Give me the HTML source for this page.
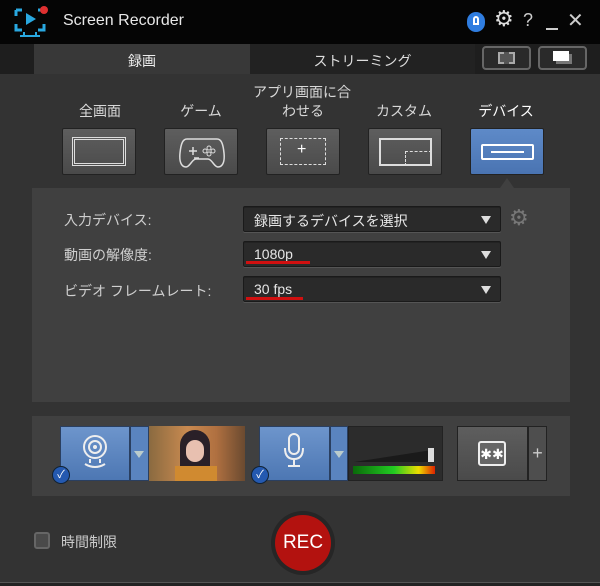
<!DOCTYPE html>
<html><head><meta charset="utf-8"><style>
*{margin:0;padding:0;box-sizing:border-box}
body{width:600px;height:586px;background:#333;position:relative;overflow:hidden;font-family:"Liberation Sans","Noto Sans CJK JP",sans-serif;color:#ddd}
.a{position:absolute}
.lbl{font-size:14px;color:#d8d8d8;text-align:center;width:100px}
.btn{position:absolute;top:128px;width:74px;height:47px;background:linear-gradient(#5e5e5e,#4a4a4a);border:1px solid #222;border-radius:2px}
.dd{position:absolute;left:243px;width:258px;height:26px;background:#2a2a2a;border:1px solid #1a1a1a;border-radius:2px;box-shadow:inset 0 1px 0 #222, 0 1px 0 #555;font-size:14px;color:#e6e6e6;padding:4px 10px}
.dd:after{content:"";position:absolute;right:9px;top:9px;border-left:5px solid transparent;border-right:5px solid transparent;border-top:8px solid #ddd}
.fl{position:absolute;left:64px;font-size:14px;color:#cfcfcf}
</style></head><body>
<div class="a" style="left:0;top:0;width:600px;height:44px;background:#050505"></div>
<svg class="a" style="left:14px;top:6px" width="34" height="32" viewBox="0 0 34 32"><path d="M2 4h6M2 4v6M2 18v6h6M30 18v6h-6M24 4h3" stroke="#29a8e0" stroke-width="3" fill="none"/><path d="M12 7l10 6-10 6z" fill="#29a8e0"/><path d="M10 26v4M22 26v4M6 30h20" stroke="#29a8e0" stroke-width="2"/><circle cx="30" cy="4" r="4" fill="#e03030"/></svg>
<div class="a" style="left:63px;top:12px;font-size:16px;color:#e8e8e8">Screen Recorder</div>
<div class="a" style="left:467px;top:12px;width:18px;height:20px;border-radius:9px;background:#2f7de0"></div>
<div class="a" style="left:473px;top:16px;width:6px;height:9px;border:2px solid #fff;border-radius:3px 3px 0 0"></div>
<div class="a" style="left:494px;top:6px;font-size:22px;color:#ddd">⚙</div>
<div class="a" style="left:523px;top:10px;font-size:18px;color:#ccc">?</div>
<div class="a" style="left:546px;top:28px;width:12px;height:2px;background:#ccc"></div>
<div class="a" style="left:567px;top:8px;font-size:20px;color:#ccc">✕</div>
<div class="a" style="left:0;top:44px;width:600px;height:30px;background:#1e1e1e"></div>
<div class="a" style="left:34px;top:44px;width:216px;height:30px;background:#383838;text-align:center;font-size:14px;padding-top:7px;color:#eee">録画</div>
<div class="a" style="left:250px;top:44px;width:225px;height:30px;background:#222;text-align:center;font-size:14px;padding-top:7px;color:#ddd">ストリーミング</div>
<div class="a" style="left:482px;top:46px;width:49px;height:24px;border:2px solid #666;border-radius:4px;background:#2a2a2a"></div>
<div class="a" style="left:498px;top:52px;width:17px;height:12px;border:2px dashed #aaa;background:#555"></div>
<div class="a" style="left:538px;top:46px;width:49px;height:24px;border:2px solid #666;border-radius:4px;background:#2a2a2a"></div>
<div class="a" style="left:556px;top:54px;width:16px;height:10px;background:#777"></div>
<div class="a" style="left:553px;top:51px;width:16px;height:10px;background:#fff"></div>
<div class="a lbl" style="left:50px;top:101px">全画面</div>
<div class="a lbl" style="left:151px;top:101px">ゲーム</div>
<div class="a lbl" style="left:253px;top:82px;width:98px">アプリ画面に合</div>
<div class="a lbl" style="left:253px;top:101px">わせる</div>
<div class="a lbl" style="left:354px;top:101px">カスタム</div>
<div class="a lbl" style="left:456px;top:101px;color:#fff">デバイス</div>
<div class="btn" style="left:62px"><div class="a" style="left:9px;top:8px;width:54px;height:29px;border:3px double #ddd"></div></div>
<div class="btn" style="left:164px"><svg class="a" style="left:14px;top:6px" width="46" height="34" viewBox="0 0 46 34"><path d="M8 4h30c4 0 6 4 7 14s-2 14-6 14c-4 0-6-8-10-8H17c-4 0-6 8-10 8s-7-4-6-14S4 4 8 4z" fill="none" stroke="#ddd" stroke-width="1.5"/><path d="M10 16h8M14 12v8M15 23h5" stroke="#ddd" stroke-width="1.5"/><circle cx="30" cy="13" r="2" fill="none" stroke="#ddd"/><circle cx="34" cy="16" r="2" fill="none" stroke="#ddd"/><circle cx="26" cy="16" r="2" fill="none" stroke="#ddd"/><circle cx="30" cy="19" r="2" fill="none" stroke="#ddd"/></svg></div>
<div class="btn" style="left:266px"><div class="a" style="left:13px;top:9px;width:46px;height:27px;border:1px dashed #ddd"></div><div class="a" style="left:30px;top:12px;font-size:16px;color:#fff">+</div></div>
<div class="btn" style="left:368px"><div class="a" style="left:10px;top:9px;width:53px;height:28px;border:2px solid #ddd"></div><div class="a" style="left:36px;top:22px;width:27px;height:15px;border-left:1px dashed #ddd;border-top:1px dashed #ddd"></div></div>
<div class="btn" style="left:470px;background:linear-gradient(#5e8ac8,#4a74b2)"><div class="a" style="left:10px;top:15px;width:53px;height:16px;border:2px solid #fff;border-radius:2px"></div><div class="a" style="left:20px;top:22px;width:33px;height:2px;background:#fff"></div></div>
<div class="a" style="left:32px;top:188px;width:538px;height:214px;background:#404040"></div>
<div class="a" style="left:500px;top:178px;border-left:7px solid transparent;border-right:7px solid transparent;border-bottom:10px solid #404040"></div>
<div class="fl" style="top:210px">入力デバイス:</div>
<div class="fl" style="top:245px">動画の解像度:</div>
<div class="fl" style="top:281px">ビデオ フレームレート:</div>
<div class="dd" style="top:206px">録画するデバイスを選択</div>
<div class="dd" style="top:241px">1080p</div>
<div class="dd" style="top:276px">30 fps</div>
<div class="a" style="left:246px;top:261px;width:64px;height:3px;background:#d01010"></div>
<div class="a" style="left:246px;top:297px;width:57px;height:3px;background:#d01010"></div>
<div class="a" style="left:509px;top:205px;font-size:22px;color:#777">⚙</div>
<div class="a" style="left:32px;top:416px;width:538px;height:80px;background:#404040"></div>
<div class="a" style="left:60px;top:426px;width:70px;height:55px;background:linear-gradient(#6d95cc,#4d77b3);border:1px solid #2a3f60"></div>
<svg class="a" style="left:80px;top:433px" width="30" height="38" viewBox="0 0 30 38"><circle cx="15" cy="14" r="11" fill="none" stroke="#eee" stroke-width="2"/><circle cx="15" cy="14" r="6" fill="none" stroke="#eee" stroke-width="2"/><circle cx="15" cy="14" r="2" fill="#eee"/><path d="M10 26v4M20 26v4M5 31q10 6 20 0" stroke="#eee" stroke-width="2" fill="none"/></svg>
<div class="a" style="left:130px;top:426px;width:19px;height:55px;background:#5a84bf;border:1px solid #2a3f60"></div>
<div class="a" style="left:134px;top:451px;border-left:5px solid transparent;border-right:5px solid transparent;border-top:7px solid #bcc"></div>
<div class="a" style="left:149px;top:426px;width:96px;height:55px;background:linear-gradient(90deg,#8a6a40,#c98a50 40%,#b07040 70%,#6a4a30)"></div>
<div class="a" style="left:180px;top:430px;width:30px;height:48px;border-radius:15px 15px 4px 4px;background:#2a2028"></div>
<div class="a" style="left:186px;top:440px;width:18px;height:22px;border-radius:9px;background:#e8c0b0"></div>
<div class="a" style="left:175px;top:466px;width:42px;height:15px;background:#d08a30"></div>
<div class="a" style="left:259px;top:426px;width:71px;height:55px;background:linear-gradient(#6d95cc,#4d77b3);border:1px solid #2a3f60"></div>
<svg class="a" style="left:280px;top:432px" width="28" height="40" viewBox="0 0 28 40"><rect x="9" y="2" width="10" height="20" rx="5" fill="none" stroke="#eee" stroke-width="2"/><path d="M5 16q0 11 9 11t9-11M14 27v6M8 34h12" stroke="#eee" stroke-width="2" fill="none"/></svg>
<div class="a" style="left:330px;top:426px;width:18px;height:55px;background:#5a84bf;border:1px solid #2a3f60"></div>
<div class="a" style="left:334px;top:451px;border-left:5px solid transparent;border-right:5px solid transparent;border-top:7px solid #bcc"></div>
<div class="a" style="left:348px;top:426px;width:95px;height:55px;background:#2c2c2c;border:1px solid #222"></div>
<svg class="a" style="left:352px;top:444px" width="84" height="20"><path d="M2 18L80 6V18z" fill="#1a1a1a"/><rect x="76" y="4" width="6" height="14" fill="#ddd"/></svg>
<div class="a" style="left:353px;top:466px;width:82px;height:8px;background:linear-gradient(90deg,#0a6a0a,#22cc22 50%,#eedd00 80%,#dd2200)"></div>
<div class="a" style="left:457px;top:426px;width:71px;height:55px;background:linear-gradient(#5e5e5e,#4a4a4a);border:1px solid #222"></div>
<div class="a" style="left:478px;top:441px;width:28px;height:25px;border:2px solid #eee;border-radius:3px;background:#666;font-size:14px;color:#fff;text-align:center;line-height:22px">✱✱</div>
<div class="a" style="left:528px;top:426px;width:19px;height:55px;background:#4e4e4e;border:1px solid #222;color:#ccc;font-size:18px;text-align:center;line-height:52px">+</div>
<div class="a" style="left:52px;top:466px;width:18px;height:18px;border-radius:9px;background:#2459b0;border:1px solid #123;color:#fff;font-size:11px;text-align:center;line-height:16px">✓</div>
<div class="a" style="left:251px;top:466px;width:18px;height:18px;border-radius:9px;background:#2459b0;border:1px solid #123;color:#fff;font-size:11px;text-align:center;line-height:16px">✓</div>
<div class="a" style="left:34px;top:532px;width:16px;height:17px;border:2px solid #666;border-radius:3px;background:#4a4a4a"></div>
<div class="a" style="left:61px;top:532px;font-size:14px;color:#ccc">時間制限</div>
<div class="a" style="left:271px;top:511px;width:64px;height:64px;border-radius:32px;background:#262626"></div>
<div class="a" style="left:275px;top:515px;width:56px;height:56px;border-radius:28px;background:#b3120f;color:#fff;font-size:19px;text-align:center;line-height:56px">REC</div>
<div class="a" style="left:0;top:582px;width:600px;height:4px;background:#222;border-top:1px solid #555"></div>
</body></html>
